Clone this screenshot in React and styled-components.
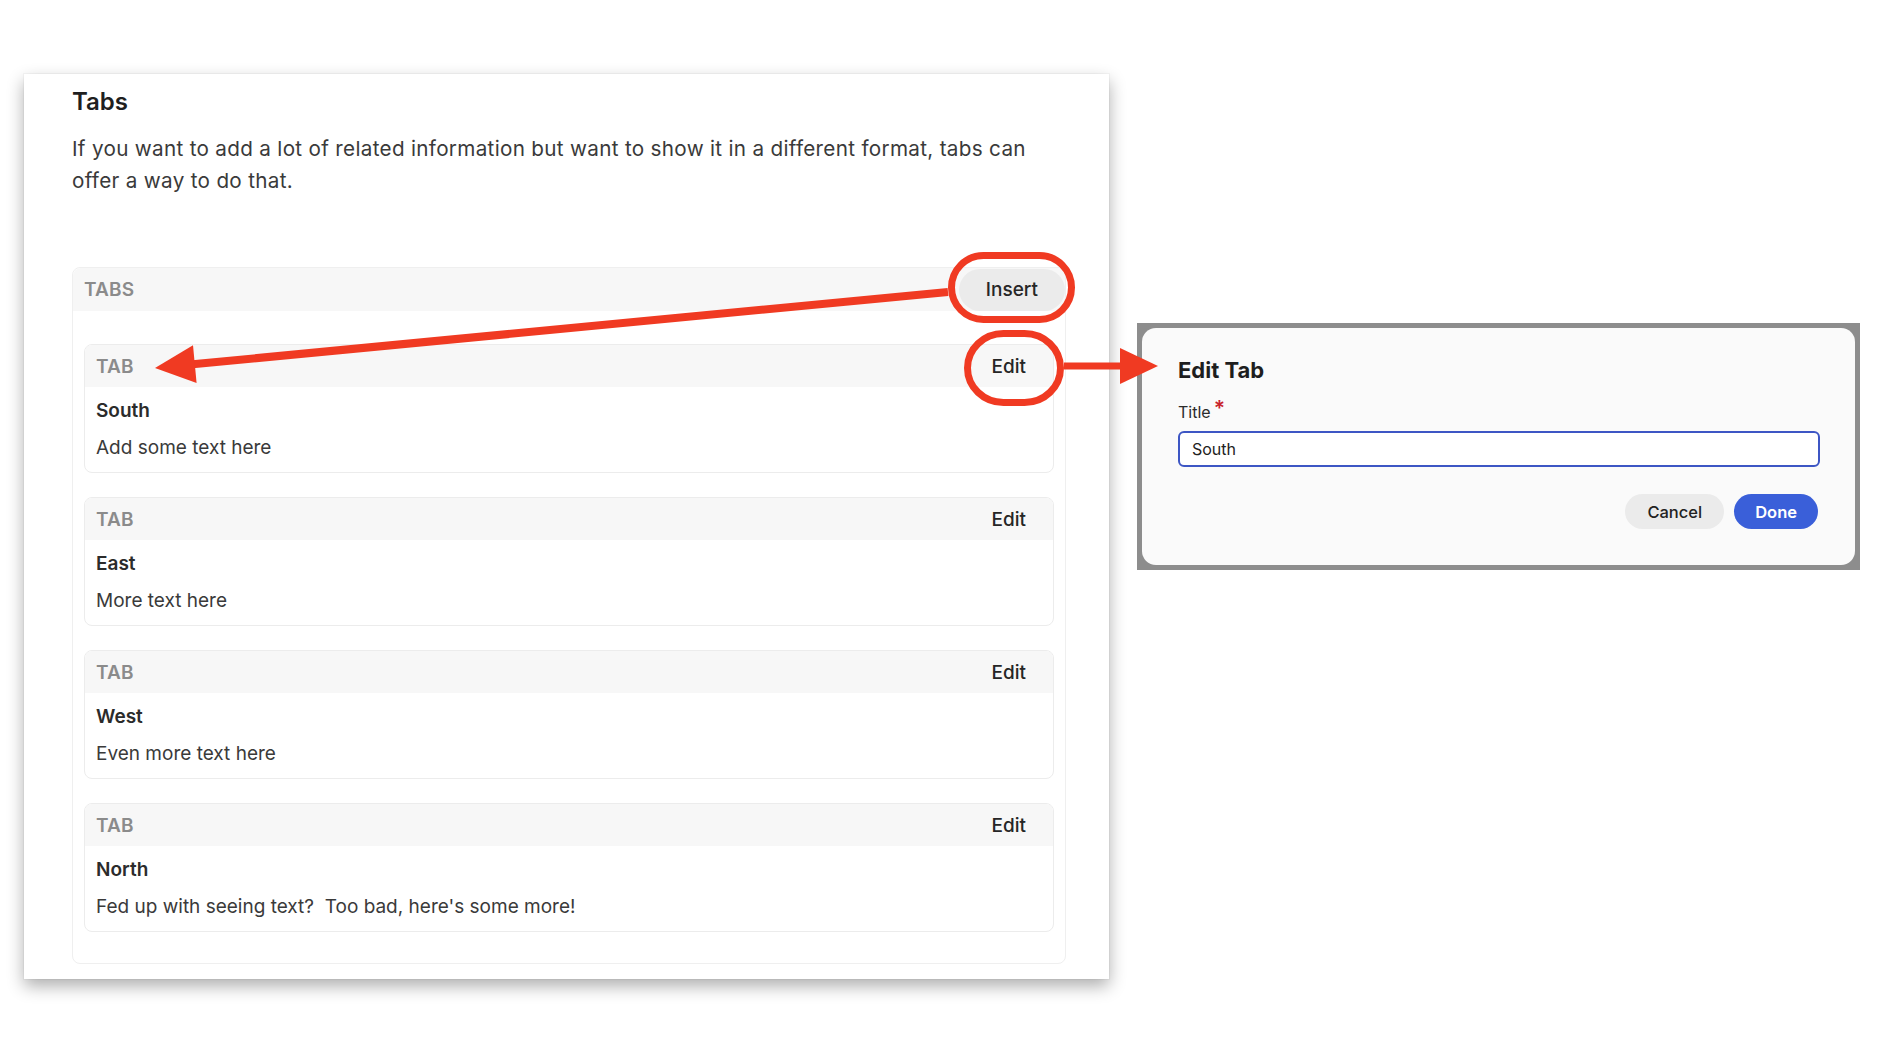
import * as React from 'react';
import styled, { createGlobalStyle } from 'styled-components';

const GlobalStyle = createGlobalStyle`
  html, body {
    margin: 0;
    padding: 0;
    background: #ffffff;
  }
  body {
    font-family: Inter, "Noto Sans", "Liberation Sans", sans-serif;
    color: #2b2b2b;
  }
  * {
    box-sizing: border-box;
  }
`;

const Page = styled.div`
  position: relative;
  width: 1878px;
  height: 1057px;
  overflow: hidden;
  display: flex;
  align-items: flex-start;
  gap: 28px;
  padding: 74px 0 0 24px;
`;

const DocCard = styled.section`
  width: 1085px;
  background: #ffffff;
  padding: 14px 43px 15px 48px;
  box-shadow: 0 7px 16px rgba(0, 0, 0, 0.32), 0 0 0 1px rgba(0, 0, 0, 0.03);
`;

const Heading = styled.h2`
  margin: 0;
  font-size: 24px;
  line-height: 28px;
  font-weight: 600;
  color: #1f1f1f;
`;

const Intro = styled.p`
  margin: 17px 0 0;
  font-size: 20.7px;
  letter-spacing: 0.3px;
  line-height: 32px;
  color: #3a3a3a;
  max-width: 975px;
`;

const TabsBlock = styled.div`
  margin-top: 70px;
  border: 1px solid #efefef;
  border-radius: 8px;
  padding-bottom: 31px;
`;

const BlockHeader = styled.div`
  height: 43px;
  display: flex;
  align-items: center;
  justify-content: space-between;
  background: #f7f7f7;
  padding-left: 11px;
  border-radius: 8px 8px 0 0;
`;

const Kicker = styled.span`
  font-size: 19px;
  font-weight: 600;
  color: #8b8b8b;
  letter-spacing: 0.2px;
`;

const PillButton = styled.button`
  font-family: inherit;
  height: 42px;
  padding: 0 27px;
  border: none;
  border-radius: 21px;
  background: ${p => (p.$ghost ? 'transparent' : '#ebebeb')};
  font-size: 19px;
  font-weight: 500;
  color: #262626;
  cursor: pointer;
`;

const TabList = styled.div`
  display: flex;
  flex-direction: column;
  gap: 24px;
  padding: 33px 11px 0;
`;

const TabCard = styled.article`
  border: 1px solid #ececec;
  border-radius: 8px;
  overflow: hidden;
`;

const TabHeader = styled.div`
  height: 42px;
  display: flex;
  align-items: center;
  justify-content: space-between;
  background: #f7f7f7;
  padding-left: 11px;
`;

const TabBody = styled.div`
  padding: 11px 11px 11px;
  display: flex;
  flex-direction: column;
  gap: 11px;
`;

const TabTitle = styled.div`
  font-size: 19px;
  line-height: 26px;
  font-weight: 600;
  color: #2b2b2b;
`;

const TabText = styled.div`
  font-size: 19px;
  line-height: 26px;
  color: #3a3a3a;
`;

const DialogFrame = styled.div`
  margin-top: 249px;
  width: 723px;
  padding: 5px;
  background: #8d8d8d;
`;

const Dialog = styled.div`
  background: #fafafa;
  border-radius: 14px;
  padding: 28px 35px 36px 36px;
`;

const DialogTitle = styled.h3`
  margin: 0;
  font-size: 22px;
  line-height: 28px;
  font-weight: 700;
  color: #1e1e1e;
`;

const Label = styled.label`
  display: block;
  margin-top: 18px;
  font-size: 16px;
  line-height: 20px;
  color: #2b2b2b;
`;

const Required = styled.span`
  color: #c8232c;
  font-size: 21px;
  font-weight: 600;
  line-height: 0;
  margin-left: 3px;
  position: relative;
  top: -2px;
`;

const TextInput = styled.input`
  display: block;
  width: 100%;
  height: 36px;
  margin-top: 9px;
  padding: 0 12px;
  border: 2px solid #3d56c4;
  border-radius: 6px;
  background: #ffffff;
  font-family: inherit;
  font-size: 16px;
  color: #222;
  outline: none;
`;

const Actions = styled.div`
  display: flex;
  justify-content: flex-end;
  gap: 10px;
  margin-top: 27px;
  padding-right: 2px;
`;

const DialogButton = styled.button`
  font-family: inherit;
  height: 35px;
  padding: 0 ${p => (p.$primary ? '21px' : '22px')};
  border: none;
  border-radius: 18px;
  background: ${p => (p.$primary ? '#3a5fd9' : '#ebebeb')};
  color: ${p => (p.$primary ? '#ffffff' : '#222222')};
  font-size: 16.5px;
  font-weight: ${p => (p.$primary ? 600 : 500)};
  cursor: pointer;
`;

const Annotations = styled.svg`
  position: absolute;
  left: 0;
  top: 0;
  pointer-events: none;
`;

const tabs = [
  { title: 'South', text: 'Add some text here' },
  { title: 'East', text: 'More text here' },
  { title: 'West', text: 'Even more text here' },
  { title: 'North', text: 'Fed up with seeing text?\u00a0 Too bad, here\'s some more!' },
];

const RED = '#f03a22';

const App = () => (
  <>
    <GlobalStyle />
    <Page>
      <DocCard>
        <Heading>Tabs</Heading>
        <Intro>
          If you want to add a lot of related information but want to show it in a different format, tabs can offer a way to do that.
        </Intro>
        <TabsBlock>
          <BlockHeader>
            <Kicker>TABS</Kicker>
            <PillButton>Insert</PillButton>
          </BlockHeader>
          <TabList>
            {tabs.map(t => (
              <TabCard key={t.title}>
                <TabHeader>
                  <Kicker>TAB</Kicker>
                  <PillButton $ghost>Edit</PillButton>
                </TabHeader>
                <TabBody>
                  <TabTitle>{t.title}</TabTitle>
                  <TabText>{t.text}</TabText>
                </TabBody>
              </TabCard>
            ))}
          </TabList>
        </TabsBlock>
      </DocCard>

      <DialogFrame>
        <Dialog>
          <DialogTitle>Edit Tab</DialogTitle>
          <Label>
            Title<Required>*</Required>
          </Label>
          <TextInput defaultValue="South" />
          <Actions>
            <DialogButton>Cancel</DialogButton>
            <DialogButton $primary>Done</DialogButton>
          </Actions>
        </Dialog>
      </DialogFrame>

      <Annotations width="1878" height="1057" viewBox="0 0 1878 1057">
        <rect x="951.5" y="255.5" width="120" height="64" rx="32" fill="none" stroke={RED} strokeWidth="7" />
        <rect x="967.5" y="333.5" width="93" height="69" rx="36" fill="none" stroke={RED} strokeWidth="7" />
        <line x1="948" y1="292" x2="190" y2="364.5" stroke={RED} strokeWidth="8" />
        <polygon points="155,368 193,345.3 196.6,383.1" fill={RED} />
        <line x1="1064" y1="366" x2="1124" y2="366" stroke={RED} strokeWidth="7" />
        <polygon points="1158,366 1120,348 1120,384" fill={RED} />
      </Annotations>
    </Page>
  </>
);

export default App;
